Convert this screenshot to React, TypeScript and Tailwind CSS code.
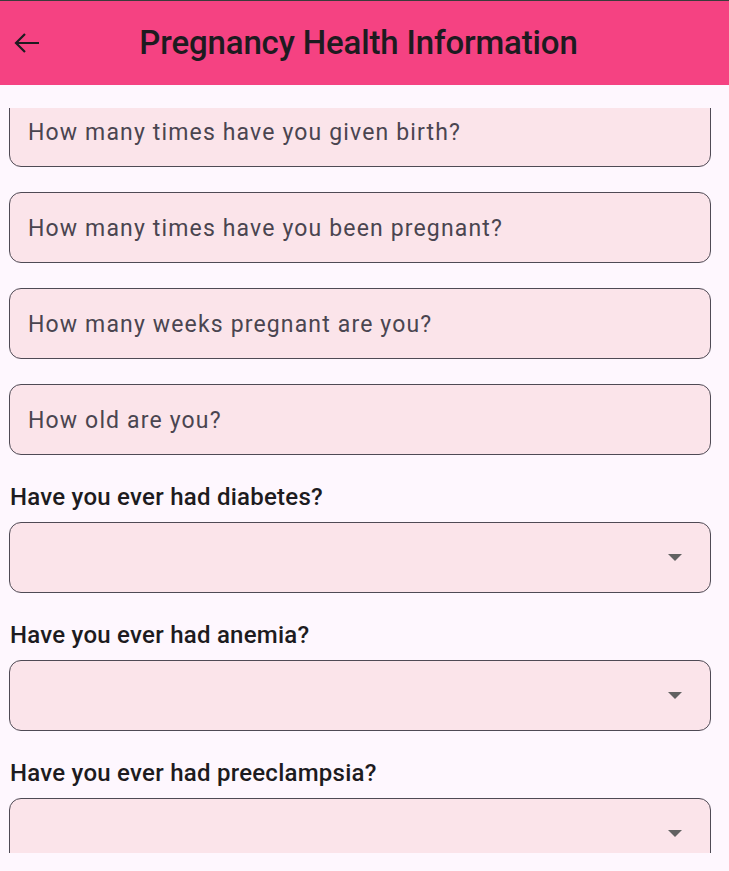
import React from "react";

const questions = [
  "How many times have you given birth?",
  "How many times have you been pregnant?",
  "How many weeks pregnant are you?",
  "How old are you?",
];

const dropdowns = [
  "Have you ever had diabetes?",
  "Have you ever had anemia?",
  "Have you ever had preeclampsia?",
];

function Field({ placeholder }: { placeholder: string }) {
  return (
    <div className="h-[71px] rounded-[12px] border border-[#4f4a55] bg-[#fbe4ea] flex items-center pl-[18px] pt-[4px]">
      <span className="text-[23px] tracking-[1.15px] text-[#4a4550]">{placeholder}</span>
    </div>
  );
}

function Dropdown({ label }: { label: string }) {
  return (
    <div className="flex flex-col">
      <div className="h-[50px] flex items-center pl-px text-[24px] font-medium tracking-[0.25px] text-[#1d1b20]">{label}</div>
      <div className="h-[71px] rounded-[12px] border border-[#4f4a55] bg-[#fbe4ea] flex items-center justify-end pr-[28px]">
        <svg width="14" height="7" viewBox="0 0 14 7">
          <path d="M0 0h14L7 7z" fill="#626262" />
        </svg>
      </div>
    </div>
  );
}

export default function App() {
  return (
    <div className="h-[871px] w-[729px] bg-[#fef7fe] flex flex-col overflow-hidden" style={{ fontFamily: "Roboto, sans-serif" }}>
      <div className="h-px bg-[#3b3b3b]" />
      <header className="h-[84px] bg-[#f54282] flex items-center">
        <button className="ml-[14px] flex items-center justify-center">
          <svg width="26" height="22" viewBox="0 0 26 22" fill="none" stroke="#1d1b20" strokeWidth="2.2">
            <path d="M25 11H2M11 2L2 11l9 9" />
          </svg>
        </button>
        <h1 className="flex-1 text-center pr-[52px] text-[33px] font-medium tracking-[-0.15px] text-[#1d1b20]">
          Pregnancy Health Information
        </h1>
      </header>
      <div className="mt-[23px] h-[745px] overflow-hidden pl-[9px] pr-[18px]">
        <div className="-mt-[12px] flex flex-col">
          <div className="flex flex-col gap-[25px]">
            {questions.map((q) => (
              <Field key={q} placeholder={q} />
            ))}
          </div>
          <div className="mt-[17px] flex flex-col gap-[17px]">
            {dropdowns.map((d) => (
              <Dropdown key={d} label={d} />
            ))}
          </div>
        </div>
      </div>
    </div>
  );
}
